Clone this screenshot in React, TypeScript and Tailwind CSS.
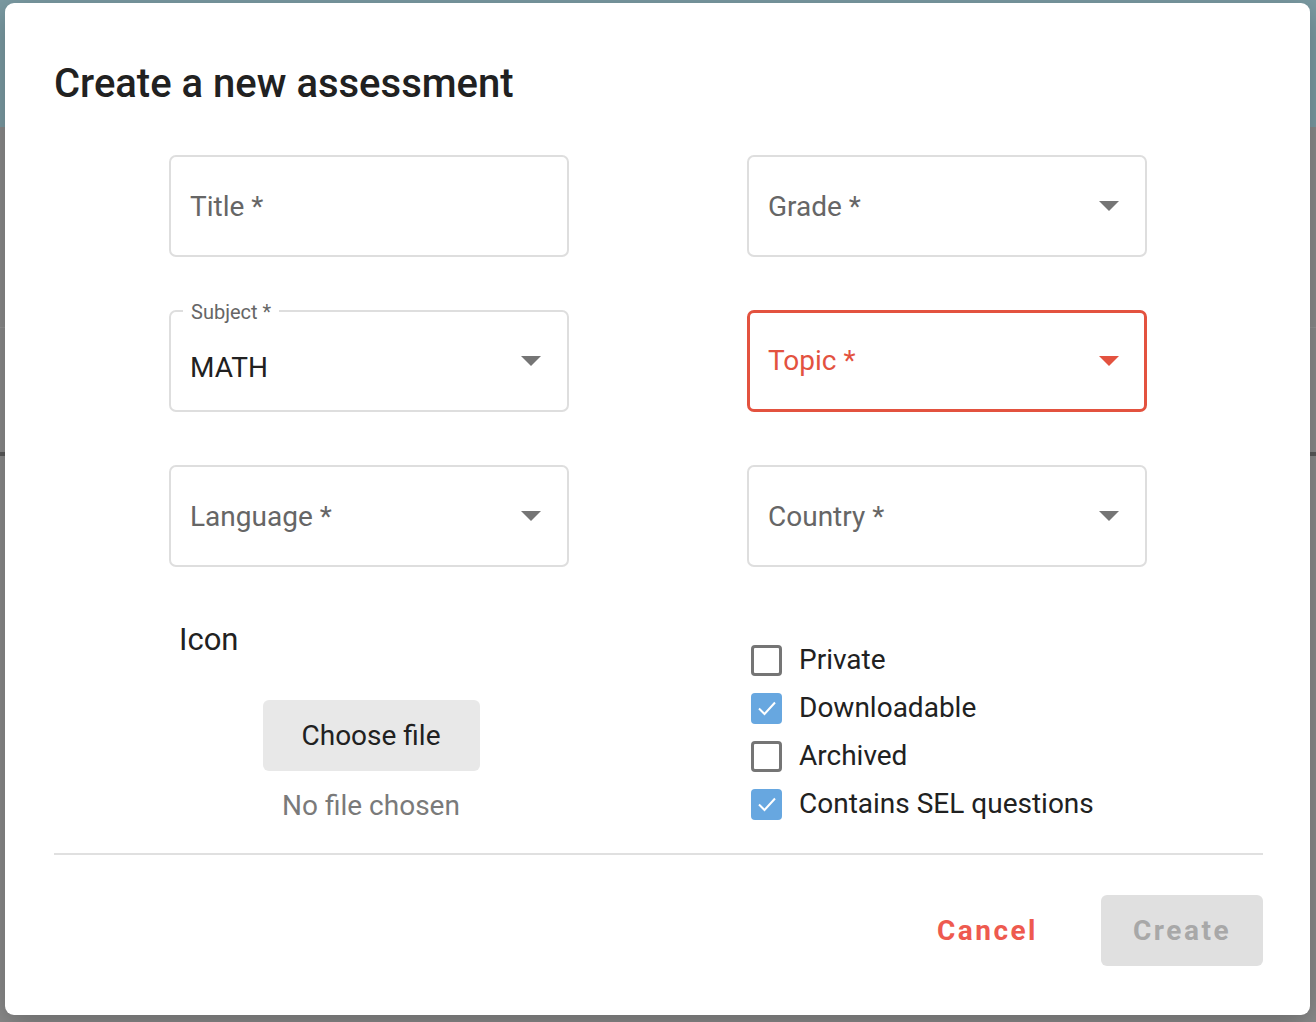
import React from 'react'

function Arrow({ color = '#757575' }: { color?: string }) {
    return (
        <svg width="20" height="10" viewBox="0 0 20 10" className="shrink-0">
            <polygon points="0,0 20,0 10,10" fill={color} />
        </svg>
    );
}

function Field({ label, select }: { label: string; select?: boolean }) {
    return (
        <div className="h-[102px] rounded-[7px] border-2 border-[#dedede] flex items-center justify-between pl-[19px] pr-[26px]">
            <span className="text-[28px] text-[#666666] pt-[2px]">{label}</span>
            {select && <Arrow />}
        </div>
    );
}

function Check({ label, checked }: { label: string; checked?: boolean }) {
    return (
        <div className="h-[48px] flex items-center gap-[17px] pl-[4px]">
            {checked ? (
                <div className="w-[31px] h-[31px] rounded-[4px] bg-[#67a7e0] flex items-center justify-center">
                    <svg width="24" height="24" viewBox="0 0 24 24">
                        <polyline points="4,12.5 9.5,18 20,6.5" fill="none" stroke="#ffffff" strokeWidth="2" />
                    </svg>
                </div>
            ) : (
                <div className="w-[31px] h-[31px] rounded-[4px] border-[3px] border-[#757575]" />
            )}
            <span className="text-[28px] text-[#212121]">{label}</span>
        </div>
    );
}

export default function App() {
    return (
        <div className="relative h-[1022px] w-full overflow-hidden bg-[#8b8b8b] font-['Roboto',sans-serif]">
            {/* page behind the backdrop */}
            <div className="h-[127px] bg-[#7b9ba3]" />
            <div className="h-[1px] bg-[#949494] mt-[200px]" />
            <div className="h-[4px] bg-[#5a5a5a] mt-[124px]" />

            {/* Dialog */}
            <div className="absolute left-[5px] top-[3px] w-[1305px] h-[1012px] bg-white rounded-[9px] shadow-[0_8px_30px_rgba(0,0,0,0.25)] pt-[59px] pl-[49px] pr-[47px]">
                <h2 className="text-[40px] leading-[44px] font-medium text-[#212121]">Create a new assessment</h2>

                <div className="mt-[49px] pl-[115px] grid grid-cols-[400px_400px] gap-x-[178px] gap-y-[53px]">
                    <Field label="Title *" />
                    <Field label="Grade *" select />

                    {/* Subject with value */}
                    <div className="relative h-[102px] rounded-[7px] border-2 border-[#dedede] flex items-center justify-between pl-[19px] pr-[26px]">
                        <span className="absolute left-[12px] -top-[12px] bg-white px-[8px] text-[20px] leading-[24px] text-[#666666]">Subject *</span>
                        <span className="text-[28px] text-[#212121] pt-[14px]">MATH</span>
                        <Arrow />
                    </div>

                    {/* Topic (error) */}
                    <div className="h-[102px] rounded-[7px] border-[3px] border-[#e3523f] flex items-center justify-between pl-[18px] pr-[25px]">
                        <span className="text-[28px] text-[#e3523f]">Topic *</span>
                        <Arrow color="#e3523f" />
                    </div>

                    <Field label="Language *" select />
                    <Field label="Country *" select />
                </div>

                <div className="mt-[55px] pl-[115px] grid grid-cols-[400px_400px] gap-x-[178px]">
                    <div>
                        <div className="pl-[10px] text-[31px] leading-[36px] text-[#212121]">Icon</div>
                        <div className="mt-[42px] flex justify-center pl-[4px]">
                            <button className="w-[217px] h-[71px] rounded-[6px] bg-[#e8e8e8] text-[28px] text-[#212121]">Choose file</button>
                        </div>
                        <div className="mt-[17px] pl-[4px] text-center text-[28px] leading-[36px] text-[#7a7a7a]">No file chosen</div>
                    </div>
                    <div className="pt-[14px]">
                        <Check label="Private" />
                        <Check label="Downloadable" checked />
                        <Check label="Archived" />
                        <Check label="Contains SEL questions" checked />
                    </div>
                </div>

                <div className="mt-[25px] h-[2px] bg-[#e0e0e0]" />

                <div className="mt-[40px] flex justify-end items-center gap-[31px]">
                    <button className="h-[71px] px-[32px] text-[28px] font-bold tracking-[2.5px] text-[#ee5a4f]">Cancel</button>
                    <button className="w-[162px] h-[71px] rounded-[6px] bg-[#e0e0e0] text-[28px] font-bold tracking-[2.5px] text-[#a8a8a8]">Create</button>
                </div>
            </div>
        </div>
    );
}
